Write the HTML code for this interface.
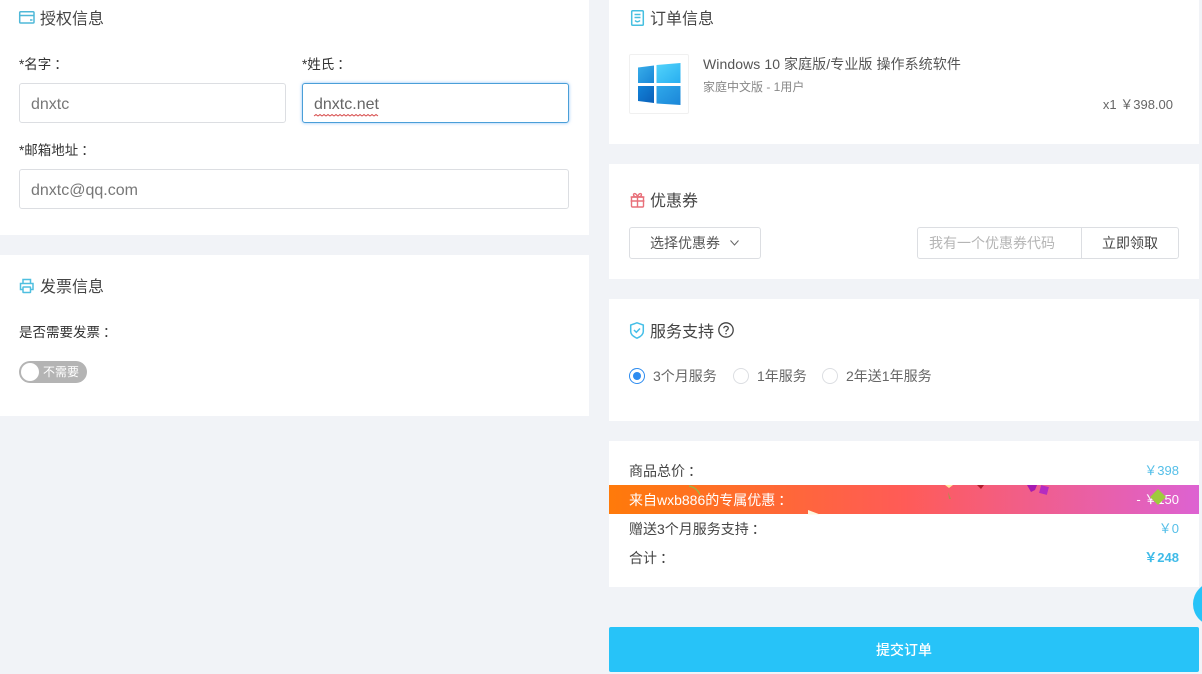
<!DOCTYPE html>
<html lang="zh"><head><meta charset="utf-8"><style>
html,body{margin:0;padding:0;width:1202px;height:674px;overflow:hidden;background:#f1f3f7}
body{position:relative;font-family:"Liberation Sans","Noto Sans CJK SC",sans-serif;color:#515a6e;font-size:14px}
.a{position:absolute}
.card{position:absolute;background:#fff}
.t{position:absolute;white-space:nowrap;line-height:20px}
.h{font-size:16px;color:#444;line-height:22px}
.lb{font-size:13.500px;color:#333}
.m{font-size:14px;color:#444}
.c{position:relative;left:3px}
.inp{position:absolute;box-sizing:border-box;background:#fff;border:1px solid #dcdee2;border-radius:3px;font-size:16px;color:#777;padding-left:11px;line-height:41px}
svg{position:absolute;overflow:visible}
.r{position:absolute;box-sizing:border-box;width:16px;height:16px;border-radius:50%;border:1px solid #dcdee2;background:#fff}
.v{font-size:14px;color:#666}
.p{font-size:13px;color:#55bfe8;text-align:right;right:23px}
</style></head><body>
<div class="card" style="left:0;top:0;width:589px;height:235px"></div>
<div class="card" style="left:0;top:255px;width:589px;height:161px"></div>
<div class="card" style="left:609px;top:0;width:590px;height:144px"></div>
<div class="card" style="left:609px;top:164px;width:590px;height:115px"></div>
<div class="card" style="left:609px;top:299px;width:590px;height:122px"></div>
<div class="card" style="left:609px;top:441px;width:590px;height:146px"></div>

<svg style="left:19px;top:11px" width="16" height="13" fill="none" stroke="#4fb8d8" stroke-width="1.500"><rect x=".7" y=".7" width="14.300" height="11.300" rx="1"/><path d="M1 4.500h14M11 9h2.500"/></svg>
<div class="t h" style="left:40px;top:9px">授权信息</div>
<div class="t lb" style="left:19px;top:55px">*名字<span class="c">：</span></div>
<div class="inp" style="left:19px;top:83px;width:267px;height:40px">dnxtc</div>
<div class="t lb" style="left:302px;top:55px">*姓氏<span class="c">：</span></div>
<div class="inp" style="left:302px;top:83px;width:267px;height:40px;border-color:#4a9fd8;box-shadow:0 0 3px rgba(45,140,240,.55);color:#666">dnxtc.net</div>
<svg style="left:314px;top:114px" width="66" height="4" fill="none" stroke="#d8504f" stroke-width="1"><path d="M0 2l2-1.500 2 1.500 2-1.500 2 1.500 2-1.500 2 1.500 2-1.500 2 1.500 2-1.500 2 1.500 2-1.500 2 1.500 2-1.500 2 1.500 2-1.500 2 1.500 2-1.500 2 1.500 2-1.500 2 1.500 2-1.500 2 1.500 2-1.500 2 1.500 2-1.500 2 1.500 2-1.500 2 1.500 2-1.500 2 1.500 2-1.500 2 1.500"/></svg>
<div class="t lb" style="left:19px;top:141px">*邮箱地址<span class="c">：</span></div>
<div class="inp" style="left:19px;top:169px;width:550px;height:40px">dnxtc@qq.com</div>

<svg style="left:19px;top:278px" width="16" height="16" fill="none" stroke="#4fbfe0" stroke-width="1.500"><path d="M4 5V1.500h7.500V5M4 11.500H1.500V5.500h12.500v6H11.500"/><rect x="4" y="9" width="7.500" height="5.500" rx=".5"/></svg>
<div class="t h" style="left:40px;top:277px">发票信息</div>
<div class="t lb" style="left:19px;top:323px">是否需要发票<span class="c">：</span></div>
<div class="a" style="left:19px;top:361px;width:68px;height:22px;border-radius:11px;background:#b4b4b4"></div>
<div class="a" style="left:21px;top:363px;width:18px;height:18px;border-radius:50%;background:#fff"></div>
<div class="t" style="left:43px;top:362px;font-size:12px;color:#fff">不需要</div>

<svg style="left:631px;top:10px" width="13" height="16" fill="none" stroke="#45bfe0" stroke-width="1.500"><rect x=".7" y=".7" width="11.600" height="14.600" rx="1"/><path d="M3.500 4.500h6M3.500 7.500h6M4 10.500c1.500 1.600 3.500 1.600 5 0"/></svg>
<div class="t h" style="left:650px;top:9px">订单信息</div>
<div class="a" style="left:629px;top:54px;width:58px;height:58px;border:1px solid #f0f0f0;border-radius:2px"></div>
<svg style="left:637px;top:62px" width="45" height="44">
<defs><linearGradient id="w1" x1="0" y1="0" x2="1" y2="1"><stop offset="0" stop-color="#38aeea"/><stop offset="1" stop-color="#1a86d6"/></linearGradient><linearGradient id="w2" x1="0" y1="0" x2="1" y2="1"><stop offset="0" stop-color="#53d4fb"/><stop offset="1" stop-color="#28aef0"/></linearGradient><linearGradient id="w3" x1="0" y1="0" x2="1" y2="1"><stop offset="0" stop-color="#1283d8"/><stop offset="1" stop-color="#0b5fb8"/></linearGradient><linearGradient id="w4" x1="0" y1="0" x2="1" y2="1"><stop offset="0" stop-color="#2fa8ea"/><stop offset="1" stop-color="#1b86d8"/></linearGradient></defs>
<path d="M1 5.500 17 3.500V21H1z" fill="url(#w1)"/><path d="M19.500 3 43.500 1V21H19.500z" fill="url(#w2)"/><path d="M1 24H17V41L1 39z" fill="url(#w3)"/><path d="M19.500 24H43.500V43L19.500 41.500z" fill="url(#w4)"/></svg>
<div class="t" style="left:703px;top:54px;font-size:14px;color:#555;letter-spacing:.08px">Windows 10 家庭版/专业版 操作系统软件</div>
<div class="t" style="left:703px;top:77px;font-size:12px;color:#888">家庭中文版 - 1用户</div>
<div class="t" style="right:29px;top:95px;font-size:13px;color:#666">x1 ￥398.00</div>

<svg style="left:630px;top:192px" width="15" height="16" fill="none" stroke="#e8707a" stroke-width="1.400"><rect x="1.500" y="5" width="12" height="10" rx="1"/><path d="M.6 5h13.800M.6 9h13.800M7.500 5v10M7.500 5C5 5 3.500 4 3.500 2.500S6.500 1 7.500 5c1-4 4-4 4-2.500S10 5 7.500 5z"/></svg>
<div class="t h" style="left:650px;top:191px">优惠券</div>
<div class="a" style="left:629px;top:227px;width:130px;height:30px;border:1px solid #dcdee2;border-radius:3px"></div>
<div class="t v" style="left:650px;top:233px;color:#555">选择优惠券</div>
<svg style="left:730px;top:240px" width="9" height="6" fill="none" stroke="#666"><path d="M.5.500 4.500 5 8.500.500"/></svg>
<div class="a" style="left:917px;top:227px;width:260px;height:30px;border:1px solid #dcdee2;border-radius:3px"></div>
<div class="a" style="left:1081px;top:228px;width:1px;height:30px;background:#dcdee2"></div>
<div class="t" style="left:929px;top:233px;font-size:14px;color:#b5b5b5">我有一个优惠券代码</div>
<div class="t" style="left:1102px;top:233px;font-size:14px;color:#444">立即领取</div>

<svg style="left:630px;top:322px" width="14" height="17" fill="none" stroke="#45bfe8" stroke-width="1.500"><path d="M7 .8 13.300 3v6.500c0 3-3 5.300-6.300 6.700C3.700 14.800.7 12.500.7 9.500V3z"/><path d="M4 8l2.300 2.300L10 6.500"/></svg>
<div class="t h" style="left:650px;top:322px">服务支持</div>
<svg style="left:718px;top:322px" width="16" height="16" fill="none" stroke="#444" stroke-width="1.300"><circle cx="8" cy="8" r="7.200"/><path d="M5.800 6.300C5.800 3.700 10.300 3.800 10.300 6.300 10.300 7.900 8 7.900 8 9.700"/><path d="M8 11v1.300"/></svg>
<div class="r" style="left:629px;top:368px;border-color:#2d8cf0"></div>
<div class="a" style="left:633px;top:372px;width:8px;height:8px;border-radius:50%;background:#2d8cf0"></div>
<div class="t v" style="left:653px;top:366px">3个月服务</div>
<div class="r" style="left:733px;top:368px"></div>
<div class="t v" style="left:757px;top:366px">1年服务</div>
<div class="r" style="left:822px;top:368px"></div>
<div class="t v" style="left:846px;top:366px">2年送1年服务</div>

<div class="t m" style="left:629px;top:461px">商品总价<span class="c">：</span></div>
<div class="t p" style="top:461px">￥398</div>
<div class="a" style="left:609px;top:485px;width:590px;height:29px;background:linear-gradient(90deg,#ff7a0a 0%,#ff5b57 50%,#dd62d2 100%)"></div>
<div class="t" style="left:629px;top:490px;font-size:14px;color:#fff">来自wxb886的专属优惠<span class="c">：</span></div>
<div class="t" style="right:23px;top:490px;font-size:13px;color:#fff">- ￥150</div>
<div class="t m" style="left:629px;top:519px">赠送3个月服务支持<span class="c">：</span></div>
<div class="t p" style="top:519px">￥0</div>
<div class="t m" style="left:629px;top:548px">合计<span class="c">：</span></div>
<div class="t p" style="top:548px;font-weight:bold;color:#3fbbe8">￥248</div>
<svg style="left:609px;top:480px" width="590" height="40">
<path d="M80 6c5 1 9 4 11 9" stroke="#9ab54a" fill="none" stroke-width="1.300"/>
<path d="M199 30l12 4.500h-12z" fill="#fff6dc"/>
<path d="M336 5h8l-4 3z" fill="#ffe9a0"/>
<path d="M339 12l3 7h-2z" fill="#b58a4e"/>
<path d="M368 5h7l-3 4z" fill="#b01c2c"/>
<path d="M418 5h10l-2 5-4 2z" fill="#a51ab0"/>
<rect x="431" y="6" width="8" height="8" transform="rotate(15 435 10)" fill="#b52bc0"/>
<path d="M549 9l8 8-8 8-8-8z" fill="#9ecb3c"/>
</svg>

<div class="a" style="left:1193px;top:582px;width:44px;height:44px;border-radius:50%;background:#27c3f8"></div>
<div class="a" style="left:609px;top:627px;width:590px;height:45px;background:#27c3f8;border-radius:2px"></div>
<div class="t" style="left:609px;top:640px;width:590px;text-align:center;font-size:14px;font-weight:500;color:#fff">提交订单</div>
</body></html>
